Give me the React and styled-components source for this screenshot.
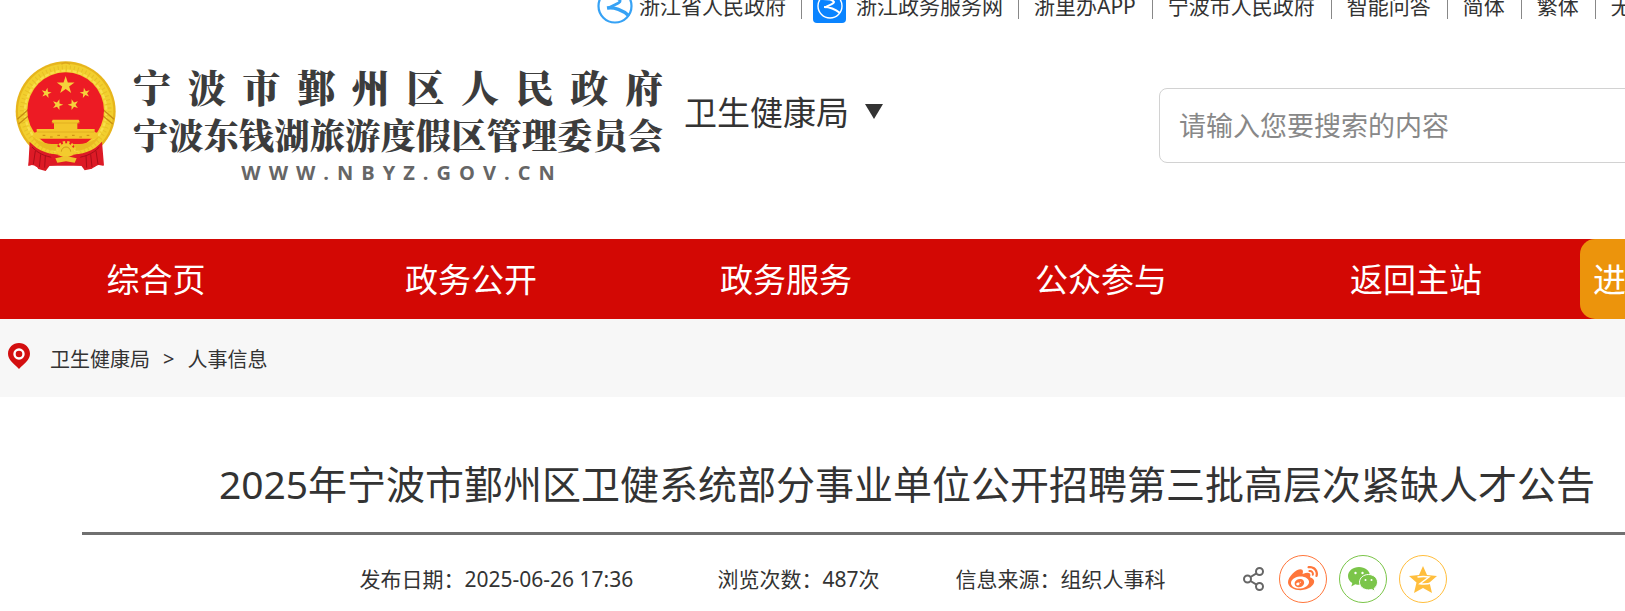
import React, { useState } from "react";
import styled, { createGlobalStyle } from "styled-components";
import { FaWeibo } from "react-icons/fa";

const GlobalStyle = createGlobalStyle`
  * {
    box-sizing: border-box;
  }

  body {
    margin: 0;
    overflow: hidden;
    background: #fff;
    color: #333;
    font-family: "Noto Sans", "Noto Sans CJK SC", sans-serif;
    font-size: 21px;
  }

  a {
    color: inherit;
    text-decoration: none;
  }
`;

const TopBar = styled.div`
  display: flex;
  align-items: flex-end;
  height: 24px;
  padding-left: 586px;
  overflow: hidden;
`;

const TopLink = styled.a`
  display: flex;
  flex: none;
  align-items: center;
  height: 36px;
  padding: ${({ $icon }) => ($icon ? "0 15px 0 11px" : "0 16px 0 15px")};
  line-height: 36px;
`;

const TopText = styled.span`
  height: 36px;
`;

const Divider = styled.span`
  flex: none;
  width: 1px;
  height: 24px;
  margin-bottom: 5px;
  background: #888;
`;

const Header = styled.header`
  display: flex;
  align-items: flex-start;
  height: 215px;
  padding: 37px 0 0 15px;
`;

const Brand = styled.a`
  display: flex;
  flex: none;
  gap: 17px;
`;

const BrandText = styled.div`
  display: flex;
  flex-direction: column;
  width: 530px;
  color: #3c3c3c;
  font-family: "Noto Serif CJK SC", "Noto Sans CJK SC", serif;
  font-weight: 900;
`;

const BrandLine = styled.span`
  font-size: ${({ $size }) => $size}px;
  line-height: 49px;
  text-align: justify;
  text-align-last: justify;
  white-space: nowrap;
`;

const BrandUrl = styled.span`
  padding-left: 8px;
  color: #666;
  font-family: "Open Sans", sans-serif;
  font-size: 20px;
  font-weight: 700;
  line-height: 28px;
  letter-spacing: 8px;
  text-align: center;
`;

const DepartmentButton = styled.button`
  display: flex;
  flex: none;
  align-items: center;
  gap: 16px;
  margin: 28px 0 0 21px;
  padding: 0;
  border: 0;
  background: none;
  color: #333;
  font-family: inherit;
  font-size: 33px;
  line-height: 48px;
  cursor: pointer;
`;

const Arrow = styled.span`
  margin-bottom: 3px;
  border: 9px solid transparent;
  border-top: 15px solid #333;
  border-bottom: 0;
`;

const SearchBox = styled.input`
  flex: none;
  width: 520px;
  height: 75px;
  margin: 27px 0 0 276px;
  padding: 0 19px;
  border: 1px solid #d2d2d2;
  border-radius: 8px;
  color: #333;
  font-family: inherit;
  font-size: 27px;
  outline: none;

  &::placeholder {
    color: #888;
    opacity: 1;
  }
`;

const Nav = styled.nav`
  display: flex;
  height: 80px;
  background: #d30804;
  color: #fff;
  font-size: 33px;
  line-height: 81px;
  overflow: hidden;
`;

const NavLink = styled.a`
  flex: 0 0 315px;
  padding-right: 3px;
  text-align: center;
`;

const NavEntry = styled.a`
  flex: none;
  width: 220px;
  margin-left: 5px;
  padding-left: 13px;
  border-radius: 15px;
  background: #ec940c;
`;

const Crumbs = styled.div`
  display: flex;
  align-items: center;
  height: 78px;
  padding-left: 8px;
  background: #f7f7f7;
  font-size: 20px;
`;

const Pin = styled.svg`
  flex: none;
  margin: 0 20px 5px 0;
`;

const CrumbSign = styled.span`
  margin: 0 13px;
`;

const Article = styled.main`
  min-width: 1650px;
  margin-left: 82px;
`;

const Title = styled.h1`
  margin: 0;
  padding: 57px 0 18px;
  border-bottom: 3px solid #707070;
  font-size: 39px;
  font-weight: 400;
  line-height: 60px;
  text-align: center;
  white-space: nowrap;
`;

const Meta = styled.div`
  display: flex;
  align-items: center;
  justify-content: center;
  gap: 76px;
  padding: 20px 8px 0 0;
  line-height: 48px;
  white-space: nowrap;
`;

const MetaItem = styled.span`
  min-width: 211px;

  &:first-child {
    min-width: 282px;
  }

  &:nth-child(2) {
    min-width: 162px;
  }
`;

const Share = styled.div`
  display: flex;
  align-items: center;
  gap: 12px;
`;

const ShareMark = styled.svg`
  margin-right: 3px;
`;

const ShareButton = styled.button`
  display: flex;
  align-items: center;
  justify-content: center;
  width: 48px;
  height: 48px;
  padding: 0;
  border: 1px solid ${({ $color }) => $color};
  border-radius: 50%;
  background: none;
  color: ${({ $color }) => $color};
  cursor: pointer;
`;

const topLinks = ["浙里办APP", "宁波市人民政府", "智能问答", "简体", "繁体", "无"];
const navLinks = ["综合页", "政务公开", "政务服务", "公众参与", "返回主站"];

function RoundLogo() {
  return (
    <svg width="42" height="36" viewBox="0 0 42 36" fill="none" stroke="#36a2f5">
      <circle cx="18" cy="18" r="16.500" strokeWidth="2.200" />
      <path d="M8 9c6 0 14 1 15 3.500 1 3-7 4-12 8" strokeWidth="2.800" />
      <path d="M10 20c7-1 16 2 22 8" strokeWidth="3.400" />
    </svg>
  );
}

function SquareLogo() {
  return (
    <svg width="43" height="36" viewBox="0 0 43 36" fill="none" stroke="#fff">
      <rect x="0" y="2" width="33" height="33" rx="4" fill="#0a84ff" stroke="none" />
      <circle cx="17" cy="18" r="12" strokeWidth="1.400" />
      <path d="M10 11c5 0 10 1 11 3 0 2-5 3-9 5.500" strokeWidth="2" />
      <path d="M11 19c5 0 11 2 16 6" strokeWidth="2.200" />
    </svg>
  );
}

const STAR = "0,-10 2.3,-3.1 9.5,-3.1 3.7,1.2 5.9,8.1 0,3.8 -5.9,8.1 -3.7,1.2 -9.5,-3.1 -2.3,-3.1";

function Star({ x, y, size, turn = 0 }) {
  return (
    <polygon
      points={STAR}
      fill="#f6d13b"
      transform={`translate(${x} ${y}) rotate(${turn}) scale(${size})`}
    />
  );
}

function Emblem() {
  return (
    <svg width="101" height="110" viewBox="45 34 303 330">
      <path d="M92 272l-4 58-3 18 22-4 8 14 22 6 12-16 48-4 47 4 10 14 22-5 9-13 24 4-6-18-4-58z" fill="#d81a24" />
      <circle cx="197" cy="185" r="150" fill="#e7b51c" />
      <circle cx="197" cy="185" r="143" fill="#f2cf2e" />
      <circle cx="197" cy="185" r="130" fill="none" stroke="#cf9b17" strokeWidth="15" strokeDasharray="3 9" opacity="0.3" />
      <circle cx="197" cy="185" r="122" fill="none" stroke="#f9de4b" strokeWidth="7" strokeDasharray="12 5" />
      <path d="M52 209l34-30M56 223l35-29M342 209l-34-30M338 223l-35-29" stroke="#c88e12" strokeWidth="4" />
      <path d="M184 44q13-10 26 0" fill="none" stroke="#dca41d" strokeWidth="4" />
      <circle cx="197" cy="183" r="115" fill="#ed1b24" />
      <Star x={197} y={107} size={2.8} />
      <Star x={139} y={130} size={1.6} turn={12} />
      <Star x={255} y={130} size={1.6} turn={-12} />
      <Star x={173} y={165} size={1.7} turn={18} />
      <Star x={220} y={165} size={1.7} turn={-18} />
      <path d="M158 210h78l3 7-7 4v17h52v9l10 3v17H100v-17l10-3v-9h52v-17l-7-4z" fill="#f3c62b" />
      <path d="M155 220h84M112 247h170" stroke="#dba31c" strokeWidth="2" />
      <path d="M128 257h8M150 262h8M172 257h8M194 262h8M216 257h8M238 262h8M260 257h8" stroke="#cb8b10" strokeWidth="3" />
      <path d="M89 276c26 29 60 40 108 40s84-11 109-40l6 72c-14-6-20-2-28 4-14 8-22 6-32-4H142c-10 10-18 12-32 4-8-6-14-8-25-4z" fill="#dd1a26" />
      <path d="M96 292c22 24 52 32 75 32M298 292c-22 24-52 32-75 32M106 304l-6 40M122 314l-4 38M136 318l-2 36M288 304l6 40M272 314l4 38M258 318l2 36" stroke="#a90e19" strokeWidth="3" fill="none" />
      <path d="M96 258c20 20 50 27 78 25l-7 21c-30-3-58-17-71-46zM298 258c-20 20-50 27-78 25l7 21c30-3 58-17 71-46z" fill="#e9ba22" />
      <circle cx="198" cy="305" r="24" fill="#f3cb2e" />
      <circle cx="198" cy="305" r="27" fill="none" stroke="#f3cb2e" strokeWidth="8" strokeDasharray="7 6" />
      <path d="M184 306a14 14 0 0 1 28 0" fill="none" stroke="#d39b18" strokeWidth="3" />
      <path d="M150 312c18 2 32 6 47 12 15-6 29-10 47-12l-8 24-39 4-39-4z" fill="#e01925" />
      <path d="M166 326l32-7 32 7-6 13-26-4-26 4z" fill="#efc32d" />
    </svg>
  );
}

function WechatIcon() {
  return (
    <svg width="30" height="26" viewBox="0 0 30 26" fill="currentColor">
      <path d="M11 1C5 1 0 4.900 0 10c0 3 1.700 5.500 4.300 7.100L3.300 20.500l4-2.200c1.200.4 2.500.5 3.900.5 6 0 10.800-3.900 10.800-9S17 1 11 1z" />
      <path d="M20.500 8.500c-5 0-9 3.400-9 7.700s4 7.700 9 7.700c1.100 0 2.200-.2 3.200-.5l3.300 2-.8-3.100c2-1.400 3.300-3.500 3.300-6.100 0-4.300-4-7.700-9-7.700z" stroke="#fff" />
      <g fill="#fff">
        <circle cx="7.500" cy="7" r="1.200" />
        <circle cx="14.500" cy="7" r="1.200" />
        <circle cx="17.500" cy="14" r="1" />
        <circle cx="23.500" cy="14" r="1" />
      </g>
    </svg>
  );
}

function QzoneIcon() {
  return (
    <svg width="28" height="27" viewBox="0 0 28 27">
      <path d="M14 0l4 9 10 1-7.500 6.500L23 27l-9-5-9 5 2.500-10.500L0 10l10-1z" fill="currentColor" />
      <path d="M8.500 11c4-.8 8-.7 11.500 0l-9 6.700c3.500.5 7.500.4 12-1" fill="none" stroke="#fff" strokeWidth="1.500" />
    </svg>
  );
}

function App() {
  const [keyword, setKeyword] = useState("");

  return (
    <>
      <GlobalStyle />
      <TopBar>
        <TopLink href="#" $icon>
          <RoundLogo />
          <TopText>浙江省人民政府</TopText>
        </TopLink>
        <Divider />
        <TopLink href="#" $icon>
          <SquareLogo />
          <TopText>浙江政务服务网</TopText>
        </TopLink>
        {topLinks.map((text) => (
          <React.Fragment key={text}>
            <Divider />
            <TopLink href="#">
              <TopText>{text}</TopText>
            </TopLink>
          </React.Fragment>
        ))}
      </TopBar>

      <Header>
        <Brand href="#">
          <Emblem />
          <BrandText>
            <BrandLine $size={38}>宁波市鄞州区人民政府</BrandLine>
            <BrandLine $size={35}>宁波东钱湖旅游度假区管理委员会</BrandLine>
            <BrandUrl>WWW.NBYZ.GOV.CN</BrandUrl>
          </BrandText>
        </Brand>
        <DepartmentButton type="button">
          卫生健康局
          <Arrow />
        </DepartmentButton>
        <SearchBox
          type="text"
          aria-label="请输入您要搜索的内容"
          placeholder="请输入您要搜索的内容"
          value={keyword}
          onChange={(e) => setKeyword(e.target.value)}
        />
      </Header>

      <Nav>
        {navLinks.map((text) => (
          <NavLink href="#" key={text}>
            {text}
          </NavLink>
        ))}
        <NavEntry href="#">进</NavEntry>
      </Nav>

      <Crumbs>
        <Pin width="22" height="26" viewBox="0 0 22 26">
          <path d="M11 0C5 0 0 4.700 0 10.800 0 17 6 21 11 26c5-5 11-9 11-15.200C22 4.700 17 0 11 0z" fill="#d30f10" />
          <circle cx="11" cy="11" r="4.500" fill="none" stroke="#fff" strokeWidth="2.400" />
        </Pin>
        <a href="#">卫生健康局</a>
        <CrumbSign>&gt;</CrumbSign>
        <a href="#">人事信息</a>
      </Crumbs>

      <Article>
        <Title>2025年宁波市鄞州区卫健系统部分事业单位公开招聘第三批高层次紧缺人才公告</Title>
        <Meta>
          <MetaItem>发布日期：2025-06-26 17:36</MetaItem>
          <MetaItem>浏览次数：487次</MetaItem>
          <MetaItem>信息来源：组织人事科</MetaItem>
          <Share>
            <ShareMark width="21" height="24" viewBox="0 0 21 24" fill="none" stroke="#666" strokeWidth="2">
              <circle cx="4.500" cy="12" r="3.500" />
              <circle cx="16.500" cy="4.500" r="3.500" />
              <circle cx="16.500" cy="19.500" r="3.500" />
              <path d="M7.500 10l6-3.700M7.500 14l6 3.700" />
            </ShareMark>
            <ShareButton type="button" aria-label="微博" $color="#ff763b">
              <FaWeibo size={30} />
            </ShareButton>
            <ShareButton type="button" aria-label="微信" $color="#7bc549">
              <WechatIcon />
            </ShareButton>
            <ShareButton type="button" aria-label="QQ空间" $color="#ffbe3d">
              <QzoneIcon />
            </ShareButton>
          </Share>
        </Meta>
      </Article>
    </>
  );
}

export default App;
